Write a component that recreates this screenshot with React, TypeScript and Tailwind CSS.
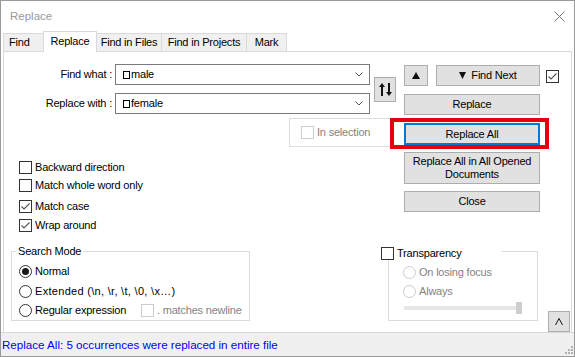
import React from "react";

function Check({ checked = false, disabled = false }: { checked?: boolean; disabled?: boolean }) {
  return (
    <span
      className={
        disabled
          ? "inline-flex w-[13px] h-[13px] shrink-0 items-center justify-center border border-[#cccccc] bg-white"
          : "inline-flex w-[13px] h-[13px] shrink-0 items-center justify-center border border-[#333333] bg-white"
      }
    >
      {checked && (
        <svg width="11" height="11" viewBox="0 0 11 11">
          <polyline points="1.5,5.5 4,8 9.5,2.5" fill="none" stroke="#555" strokeWidth="1.1" />
        </svg>
      )}
    </span>
  );
}

function Radio({ selected = false, disabled = false }: { selected?: boolean; disabled?: boolean }) {
  return (
    <span
      className={
        disabled
          ? "inline-flex w-[13px] h-[13px] shrink-0 items-center justify-center rounded-full border border-[#cccccc] bg-white"
          : "inline-flex w-[13px] h-[13px] shrink-0 items-center justify-center rounded-full border border-[#333333] bg-white"
      }
    >
      {selected && <span className="block w-[7px] h-[7px] rounded-full bg-[#1a1a1a]" />}
    </span>
  );
}

function Combo({ text }: { text: string }) {
  return (
    <div className="ml-[3px] flex h-[21px] w-[255px] items-center border border-[#7a7a7a] bg-white pl-[7px] pr-[6px]">
      <span className="inline-block h-[8px] w-[7px] border border-black" />
      <span className="ml-[1px] flex-1">{text}</span>
      <svg width="8" height="5" viewBox="0 0 8 5">
        <polyline points="0.5,0.5 4,4 7.5,0.5" fill="none" stroke="#555" strokeWidth="1" />
      </svg>
    </div>
  );
}

const btn = "flex items-center justify-center border border-[#adadad] bg-[#e1e1e1] text-black";

export default function App() {
  return (
    <div className="flex h-[357px] w-[575px] flex-col overflow-hidden border border-[#9a9a9a] bg-white font-['Liberation_Sans',Arial,sans-serif] text-[11px] leading-[13px] tracking-[-0.2px] text-black">
      {/* Title bar */}
      <div className="flex h-[30px] shrink-0 items-center justify-between pl-[9px] pr-[9px]">
        <span className="text-[11.5px] tracking-normal text-[#999999]">Replace</span>
        <svg width="11" height="11" viewBox="0 0 11 11">
          <line x1="0.5" y1="0.5" x2="10.5" y2="10.5" stroke="#777" strokeWidth="1" />
          <line x1="10.5" y1="0.5" x2="0.5" y2="10.5" stroke="#777" strokeWidth="1" />
        </svg>
      </div>

      {/* Tabs */}
      <div className="flex h-[20px] shrink-0 items-end pl-[2px]">
        <div className="flex h-[18px] w-[40px] items-center border-l border-t border-[#d9d9d9] bg-[#f0f0f0] pl-[5px]">Find</div>
        <div className="relative z-10 mb-[-1px] flex h-[21px] w-[54px] items-center justify-center border-l border-r border-t border-[#d9d9d9] bg-white pb-[1px]">
          Replace
        </div>
        <div className="flex h-[18px] w-[65px] items-center justify-center border-r border-t border-[#d9d9d9] bg-[#f0f0f0]">Find in Files</div>
        <div className="flex h-[18px] w-[85px] items-center justify-center border-r border-t border-[#d9d9d9] bg-[#f0f0f0]">Find in Projects</div>
        <div className="flex h-[18px] w-[40px] items-center justify-center border-r border-t border-[#d9d9d9] bg-[#f0f0f0]">Mark</div>
      </div>

      {/* Panel */}
      <div className="ml-[2px] mr-[2px] flex flex-1 flex-col border-l border-r border-t border-[#d9d9d9]">
        {/* Row 1 */}
        <div className="flex h-[96px] shrink-0">
          <div className="flex w-[400px] flex-col">
            <div className="mt-[12px] flex items-center">
              <div className="flex flex-col">
                <div className="flex h-[21px] items-center">
                  <span className="w-[108px] text-right">Find what :</span>
                  <Combo text="male" />
                </div>
                <div className="mt-[8px] flex h-[21px] items-center">
                  <span className="w-[108px] text-right">Replace with :</span>
                  <Combo text="female" />
                </div>
              </div>
              <div className={btn + " ml-[4px] h-[25px] w-[22px]"}>
                <svg width="13" height="13" viewBox="0 0 13 13">
                  <polygon points="3,0 6,4 4,4 4,13 2,13 2,4 0,4" fill="#111" />
                  <polygon points="10,13 13,9 11,9 11,0 9,0 9,9 7,9" fill="#111" />
                </svg>
              </div>
            </div>
            <div className="ml-[285px] mt-[4px] flex h-[29px] w-[104px] items-center border border-[#dcdcdc] pl-[11px]">
              <Check disabled />
              <span className="ml-[3px] text-[#838383]">In selection</span>
            </div>
          </div>

          <div className="flex w-[136px] flex-col pt-[13px]">
            <div className="flex gap-[8px]">
              <div className={btn + " h-[21px] w-[24px]"}>
                <svg width="8" height="7" viewBox="0 0 8 7">
                  <polygon points="4,0 8,7 0,7" fill="#111" />
                </svg>
              </div>
              <div className={btn + " h-[21px] w-[104px]"}>
                <svg width="7" height="7" viewBox="0 0 7 7">
                  <polygon points="0,0 7,0 3.5,7" fill="#111" />
                </svg>
                <span className="ml-[5px]">Find Next</span>
              </div>
            </div>
            <div className={btn + " mt-[8px] h-[21px]"}>Replace</div>
            <div className="relative mt-[8px]">
              <div className="flex h-[22px] items-center justify-center border-2 border-[#0078d7] bg-[#e1e1e1]">Replace All</div>
              <div className="absolute bottom-[-4px] left-[-14px] right-[-9px] top-[-5px] border-4 border-[#e8000d]" />
            </div>
          </div>

          <div className="ml-[6px] pt-[18px]">
            <Check checked />
          </div>
        </div>

        {/* Row 2 */}
        <div className="flex h-[92px] shrink-0">
          <div className="flex w-[400px] flex-col pl-[15px] pt-[13px]">
            <div className="flex items-center">
              <Check />
              <span className="ml-[3px]">Backward direction</span>
            </div>
            <div className="mt-[5px] flex items-center">
              <Check />
              <span className="ml-[3px]">Match whole word only</span>
            </div>
            <div className="mt-[8px] flex items-center">
              <Check checked />
              <span className="ml-[3px]">Match case</span>
            </div>
            <div className="mt-[6px] flex items-center">
              <Check checked />
              <span className="ml-[3px]">Wrap around</span>
            </div>
          </div>
          <div className="flex w-[136px] flex-col pt-[4px]">
            <div className={btn + " h-[32px] flex-col text-center leading-[13px]"}>
              <span>Replace All in All Opened</span>
              <span>Documents</span>
            </div>
            <div className={btn + " mt-[7px] h-[21px]"}>Close</div>
          </div>
        </div>

        {/* Row 3 */}
        <div className="flex flex-1 items-start">
          <div className="relative ml-[7px] mt-[11px] h-[70px] w-[239px] border border-[#dcdcdc] pl-[7px] pt-[13px]">
            <span className="absolute left-[4px] top-[-7px] bg-white px-[2px]">Search Mode</span>
            <div className="flex items-center">
              <Radio selected />
              <span className="ml-[3px]">Normal</span>
            </div>
            <div className="mt-[7px] flex items-center">
              <Radio />
              <span className="ml-[3px] tracking-[0.3px]">Extended (\n, \r, \t, \0, \x…)</span>
            </div>
            <div className="mt-[6px] flex items-center">
              <Radio />
              <span className="ml-[3px] w-[106px]">Regular expression</span>
              <Check disabled />
              <span className="ml-[3px] text-[#838383]">. matches newline</span>
            </div>
          </div>

          <div className="relative ml-[138px] mt-[11px] h-[70px] w-[150px] border border-[#dcdcdc] pl-[14px] pt-[14px]">
            <div className="absolute left-[-8px] top-[-5px] flex h-[13px] w-[121px] items-center bg-white">
              <Check />
              <span className="ml-[3px]">Transparency</span>
            </div>
            <div className="flex items-center">
              <Radio disabled />
              <span className="ml-[3px] text-[#838383]">On losing focus</span>
            </div>
            <div className="mt-[6px] flex items-center">
              <Radio disabled />
              <span className="ml-[3px] text-[#838383]">Always</span>
            </div>
            <div className="relative ml-[1px] mt-[4px] flex h-[12px] w-[118px] items-center">
              <div className="h-[4px] w-full bg-[#e6e6e6]" />
              <div className="absolute right-0 top-0 h-[12px] w-[6px] bg-[#cdcdcd]" />
            </div>
          </div>

          <div className={btn + " ml-[10px] mt-[71px] h-[21px] w-[22px]"}>
            <svg width="8" height="7" viewBox="0 0 8 7">
              <polyline points="0.5,7 4,0.5 7.5,7" fill="none" stroke="#111" strokeWidth="1" />
            </svg>
          </div>
        </div>
      </div>

      {/* Status bar */}
      <div className="flex h-[24px] shrink-0 items-center justify-between border-t border-[#d7d7d7] bg-[#f0f0f0] pl-[1px] pr-[1px]">
        <span className="text-[11.6px] tracking-normal text-[#0000ff]">Replace All: 5 occurrences were replaced in entire file</span>
        <svg className="mb-[-8px]" width="10" height="10" viewBox="0 0 10 10">
          <rect x="8" y="2" width="2" height="2" fill="#b0b0b0" />
          <rect x="5" y="5" width="2" height="2" fill="#b0b0b0" />
          <rect x="8" y="5" width="2" height="2" fill="#b0b0b0" />
          <rect x="2" y="8" width="2" height="2" fill="#b0b0b0" />
          <rect x="5" y="8" width="2" height="2" fill="#b0b0b0" />
          <rect x="8" y="8" width="2" height="2" fill="#b0b0b0" />
        </svg>
      </div>
    </div>
  );
}
